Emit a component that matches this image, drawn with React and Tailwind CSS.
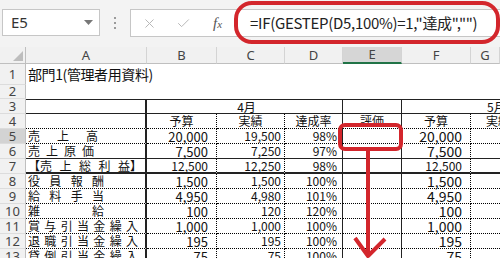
import { X, Check } from "lucide-react";

const JP = "font-['Noto_Sans_CJK_JP','Noto_Sans',sans-serif]";
const UI = "font-['Noto_Sans','Noto_Sans_CJK_JP',sans-serif]";
const COLS = "grid grid-cols-[26px_121px_70px_68px_58px_59px_69px_29px]";

const BOTTOM = {
  dot: "border-b border-b-black [border-bottom-style:dotted]",
  solid: "border-b border-b-[#222]",
  thick: "border-b-2 border-b-[#222]",
};
const RIGHT_DOT = "border-r border-r-black [border-right-style:dotted]";
const RIGHT_SOLID = "border-r border-r-[#222]";

const ROWS = [
  { n: 5, label: ["売", "上", "高"], lw: "w-[70px]", b: "20,000", c: "19,500", d: "98%", f: "20,000", line: "dot" },
  { n: 6, label: ["売", "上", "原", "価"], lw: "w-[66px]", b: "7,500", c: "7,250", d: "97%", f: "7,500", line: "solid" },
  { n: 7, label: ["【売", "上", "総", "利", "益】"], lw: "w-[114px]", b: "12,500", c: "12,250", d: "98%", f: "12,500", line: "thick", small: true },
  { n: 8, label: ["役", "員", "報", "酬"], lw: "w-[76px]", b: "1,500", c: "1,500", d: "100%", f: "1,500", line: "dot" },
  { n: 9, label: ["給", "料", "手", "当"], lw: "w-[76px]", b: "4,950", c: "4,980", d: "101%", f: "4,950", line: "dot" },
  { n: 10, label: ["雑", "給"], lw: "w-[76px]", b: "100", c: "120", d: "120%", f: "100", line: "dot" },
  { n: 11, label: ["賞", "与", "引", "当", "金", "繰", "入"], lw: "w-[110px]", b: "1,000", c: "1,000", d: "100%", f: "1,000", line: "dot" },
  { n: 12, label: ["退", "職", "引", "当", "金", "繰", "入"], lw: "w-[110px]", b: "195", c: "195", d: "100%", f: "195", line: "dot" },
  { n: 13, label: ["貸", "倒", "引", "当", "金", "繰", "入"], lw: "w-[110px]", b: "75", c: "75", d: "100%", f: "75", line: "dot" },
];

function RowHead({ n, sel, className = "" }) {
  return (
    <div
      className={`${UI} flex items-center justify-center text-[13px] leading-none text-[#444] border-r border-r-[#bfbfbf] border-b border-b-[#dcdcdc] ${
        sel ? "bg-[#d3d3d3]" : "bg-[#f1f1f1]"
      } ${className}`}
    >
      {n}
    </div>
  );
}

function ColHead({ children, sel }) {
  return (
    <div
      className={`${UI} flex items-center justify-center text-[13px] leading-none text-[#444] border-r border-r-[#d4d4d4] ${
        sel ? "bg-[#d6d6d6] border-b-2 border-b-[#217346]" : "bg-[#f1f1f1] border-b border-b-[#bfbfbf]"
      }`}
    >
      {children}
    </div>
  );
}

function DataRow({ r }) {
  const bot = BOTTOM[r.line];
  const num = `${JP} flex items-center justify-end leading-none text-[#111]`;
  return (
    <div className={`${COLS} h-[15px]`}>
      <RowHead n={r.n} sel={r.n === 5} />
      <div className={`${JP} flex items-center pl-[2px] border-r-2 border-r-[#222] ${bot}`}>
        <div className={`${r.lw} flex justify-between text-[12px] leading-none text-[#111]`}>
          {r.label.map((ch, i) => (
            <span key={i}>{ch}</span>
          ))}
        </div>
      </div>
      <div className={`${num} ${r.small ? "text-[12px]" : "text-[13px]"} pr-[8px] ${RIGHT_DOT} ${bot}`}>{r.b}</div>
      <div className={`${num} text-[12px] pr-[3px] ${RIGHT_DOT} ${bot}`}>{r.c}</div>
      <div className={`${num} text-[12px] pr-[5px] ${RIGHT_SOLID} ${bot}`}>{r.d}</div>
      <div className={`${RIGHT_SOLID} ${bot}`} />
      <div className={`${num} ${r.small ? "text-[12px]" : "text-[14px]"} pr-[8px] ${RIGHT_DOT} ${bot}`}>{r.f}</div>
      <div className={bot} />
    </div>
  );
}

export default function App() {
  return (
    <div className="relative w-[500px] h-[258px] overflow-hidden bg-white">
      {/* formula bar */}
      <div className="flex h-[47px] bg-[#f3f3f3] pt-[9px]">
        <div className={`${UI} ml-[2px] w-[98px] h-[27px] bg-white border border-[#c6c6c6] flex items-center justify-between pl-[8px] pr-[6px] text-[15px] text-[#333]`}>
          E5
          <svg width="9" height="6" viewBox="0 0 9 6">
            <path d="M0 0h9L4.5 5z" fill="#777" />
          </svg>
        </div>
        <div className="w-[30px] flex flex-col items-center justify-center gap-[3px] h-[27px]">
          <span className="w-[2px] h-[2px] bg-[#9a9a9a]" />
          <span className="w-[2px] h-[2px] bg-[#9a9a9a]" />
          <span className="w-[2px] h-[2px] bg-[#9a9a9a]" />
        </div>
        <div className="flex-1 h-[28px] bg-white border border-[#c6c6c6] border-r-0 flex items-center">
          <X className="ml-[11px] w-[15px] h-[15px] text-[#b8b8b8]" strokeWidth={1.6} />
          <Check className="ml-[19px] w-[15px] h-[15px] text-[#b8b8b8]" strokeWidth={1.6} />
          <span className="ml-[22px] font-['Liberation_Serif',serif] italic text-[15px] text-[#555]">
            f<span className="text-[11px]">x</span>
          </span>
          <span className={`${JP} ml-[28px] text-[15px] text-[#222] whitespace-nowrap tracking-[-0.3px]`}>
            =IF(GESTEP(D5,100%)=1,"達成","")
          </span>
        </div>
      </div>

      {/* column headers */}
      <div className={`${COLS} h-[17px]`}>
        <div className="bg-[#f1f1f1] border-r border-r-[#bfbfbf] border-b border-b-[#bfbfbf] flex items-end justify-end pr-[2px] pb-[2px]">
          <svg width="10" height="10" viewBox="0 0 10 10">
            <path d="M10 0V10H0z" fill="#bdbdbd" />
          </svg>
        </div>
        <ColHead>A</ColHead>
        <ColHead>B</ColHead>
        <ColHead>C</ColHead>
        <ColHead>D</ColHead>
        <ColHead sel>E</ColHead>
        <ColHead>F</ColHead>
        <ColHead>G</ColHead>
      </div>

      {/* row 1 */}
      <div className={`${COLS} h-[21px]`}>
        <RowHead n={1} />
        <div className={`${JP} col-span-7 flex items-center pl-[2px] text-[14px] text-[#111] whitespace-nowrap tracking-[-0.4px]`}>
          部門1(管理者用資料)
        </div>
      </div>
      {/* row 2 */}
      <div className={`${COLS} h-[14px]`}>
        <RowHead n={2} />
      </div>
      {/* row 3 */}
      <div className={`${COLS} h-[15px] text-[12px]`}>
        <RowHead n={3} />
        <div className="border-t border-t-[#222] border-b border-b-[#222] border-r-2 border-r-[#222]" />
        <div className={`${JP} col-span-3 flex items-center justify-center pl-[4px] leading-none text-[#111] border-t border-t-[#222] border-b border-b-[#222] ${RIGHT_SOLID}`}>
          4月
        </div>
        <div className={`border-t border-t-[#222] border-b border-b-[#222] ${RIGHT_SOLID}`} />
        <div className={`${JP} col-span-2 flex items-center pl-[85px] leading-none text-[#111] whitespace-nowrap overflow-hidden border-t border-t-[#222] border-b border-b-[#222]`}>
          5月
        </div>
      </div>
      {/* row 4 */}
      <div className={`${COLS} h-[15px]`}>
        <RowHead n={4} />
        <div className={`border-r-2 border-r-[#222] ${BOTTOM.dot}`} />
        {["予算", "実績", "達成率", "評価", "予算"].map((t, i) => (
          <div
            key={i}
            className={`${JP} flex items-center justify-center text-[12px] leading-none text-[#111] ${BOTTOM.dot} ${
              i === 2 || i === 3 ? RIGHT_SOLID : RIGHT_DOT
            }`}
          >
            {t}
          </div>
        ))}
        <div className={`${JP} flex items-center pl-[15px] text-[12px] leading-none text-[#111] whitespace-nowrap overflow-hidden ${BOTTOM.dot}`}>
          実績
        </div>
      </div>
      {ROWS.map((r) => (
        <DataRow key={r.n} r={r} />
      ))}

      {/* red annotations */}
      <svg className="absolute left-0 top-0 pointer-events-none" width="500" height="258" viewBox="0 0 500 258">
        <rect x="236" y="3" width="262" height="39" rx="16" fill="none" stroke="#d3262c" strokeWidth="4" />
        <rect x="340" y="125" width="61" height="24" rx="5" fill="none" stroke="#d3262c" strokeWidth="4" />
        <path d="M368 151V256" stroke="#d3262c" strokeWidth="4" fill="none" />
        <path d="M355 238L368 256L385 239" stroke="#d3262c" strokeWidth="4" fill="none" strokeLinejoin="round" />
      </svg>
    </div>
  );
}
